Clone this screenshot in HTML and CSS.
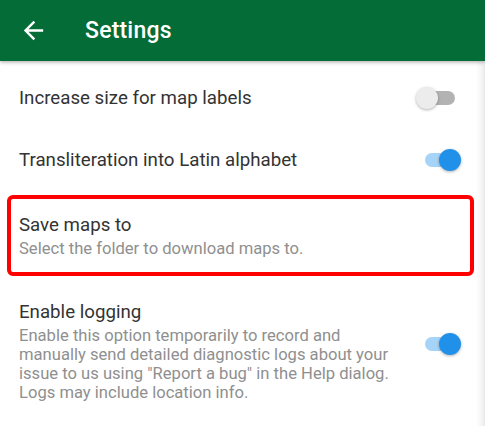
FILE: index.html
```html
<!DOCTYPE html>
<html>
<head>
<meta charset="utf-8">
<link rel="stylesheet" href="styles.css">
</head>
<body>
<header class="appbar">
  <svg class="back" viewBox="0 0 24 24" width="29" height="29"><path fill="#fff" d="M20 11H7.83l5.59-5.59L12 4l-8 8 8 8 1.41-1.41L7.83 13H20v-2z"/></svg>
  <h1 class="title">Settings</h1>
</header>
<main class="list">
  <div class="row">
    <div class="text"><div class="label">Increase size for map labels</div></div>
    <div class="switch"><span class="track"></span><span class="thumb"></span></div>
  </div>
  <div class="row">
    <div class="text"><div class="label">Transliteration into Latin alphabet</div></div>
    <div class="switch on"><span class="track"></span><span class="thumb"></span></div>
  </div>
  <div class="highlight">
    <div class="label">Save maps to</div>
    <div class="sub">Select the folder to download maps to.</div>
  </div>
  <div class="row multi">
    <div class="text">
      <div class="label">Enable logging</div>
      <div class="sub desc">Enable this option temporarily to record and manually send detailed diagnostic logs about your issue to us using "Report a bug" in the Help dialog. Logs may include location info.</div>
    </div>
    <div class="switch on"><span class="track"></span><span class="thumb"></span></div>
  </div>
</main>
</body>
</html>
```
FILE: styles.css
```css
html, body {
  margin: 0;
  padding: 0;
}
body {
  width: 485px;
  height: 426px;
  overflow: hidden;
  font-family: Roboto, "Noto Sans", sans-serif;
  background: linear-gradient(to left, #e9e9e9 0px, #f6f6f6 4px, #fff 9px);
}
.appbar {
  height: 61px;
  background: #046c37;
  display: flex;
  align-items: center;
  box-shadow: 0 1px 4px rgba(0,0,0,0.35);
  position: relative;
  z-index: 1;
}
.back {
  margin-left: 19px;
  display: block;
}
.title {
  margin: 0 0 0 37px;
  color: #fff;
  font-size: 23px;
  font-weight: 500;
  letter-spacing: 0.2px;
}
.list {
  padding-top: 6px;
}
.row {
  display: flex;
  align-items: center;
  height: 62px;
  padding: 0 23px 0 19px;
}
.text {
  flex: 1;
}
.label {
  font-size: 18.7px;
  line-height: 24px;
  color: #333333;
}
.sub {
  font-size: 16.6px;
  line-height: 20px;
  color: #8f8f8f;
}
.highlight {
  margin: 4px 11px 0 7px;
  height: 81px;
  box-sizing: border-box;
  border: 4px solid #ff0000;
  border-radius: 6px;
  padding: 14px 8px 0 8px;
}
.highlight .sub {
  margin-top: 2px;
}
.row.multi {
  height: auto;
  padding-top: 24px;
  align-items: center;
}
.row.multi .text {
  padding-right: 24px;
}
.desc {
  margin-top: 2px;
  line-height: 19px;
}
.switch {
  position: relative;
  width: 46px;
  height: 24px;
  flex: none;
}
.track {
  position: absolute;
  left: 5px;
  top: 5px;
  width: 34px;
  height: 14px;
  border-radius: 7px;
  background: #b3b3b3;
}
.thumb {
  position: absolute;
  left: 0;
  top: 1px;
  width: 22px;
  height: 22px;
  border-radius: 50%;
  background: #ececec;
  box-shadow: 0 1px 3px rgba(0,0,0,0.3);
}
.switch.on .track {
  left: 9px;
  background: #a6d3f8;
}
.switch.on .thumb {
  left: 23px;
  background: #2190e8;
}
.row.multi .switch {
  margin-top: -14px;
}
```
